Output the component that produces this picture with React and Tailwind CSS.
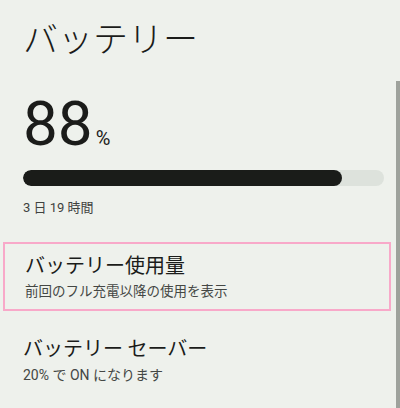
import React from "react";

export default function App() {
  return (
    <div className="relative w-[400px] h-[408px] overflow-hidden bg-[#eef1ec] font-['Noto_Sans_CJK_JP',sans-serif] text-[#1b1c1a]">
      <div className="absolute right-0 top-[81px] w-[4px] h-[327px] bg-[#9ea29c]" />
      <div className="pl-[23px] pr-[16px]">
        <h1 className="pt-[17px] text-[35px] leading-[40px] font-light">バッテリー</h1>
        <div className="mt-[35px] flex items-baseline h-[64px] font-['Roboto',sans-serif]">
          <span className="text-[62px] leading-[64px] font-normal">88</span>
          <span className="ml-[3px] text-[20px] leading-[20px]">%</span>
        </div>
        <div className="mt-[14px] w-[361px] h-[16px] rounded-full bg-[#dde2dc] overflow-hidden">
          <div className="h-full w-[319px] rounded-full bg-[#1a1c19]" />
        </div>
        <div className="mt-[12px] text-[13px] leading-[20px] text-[#3f423f] font-['Roboto','Noto_Sans_CJK_JP',sans-serif]">
          3 日 19 時間
        </div>
      </div>
      <div className="mt-[24px] ml-[3px] w-[388px] h-[69px] border-2 border-[#f8a9c9] pl-[20px] pt-[7px]">
        <div className="text-[20px] leading-[28px]">バッテリー使用量</div>
        <div className="text-[13.5px] leading-[22px] text-[#444744]">前回のフル充電以降の使用を表示</div>
      </div>
      <div className="pl-[23px] pt-[23px]">
        <div className="text-[20px] leading-[28px]">バッテリー セーバー</div>
        <div className="mt-[2px] text-[14px] leading-[22px] text-[#444744] font-['Roboto','Noto_Sans_CJK_JP',sans-serif]">20% で ON になります</div>
      </div>
    </div>
  );
}
